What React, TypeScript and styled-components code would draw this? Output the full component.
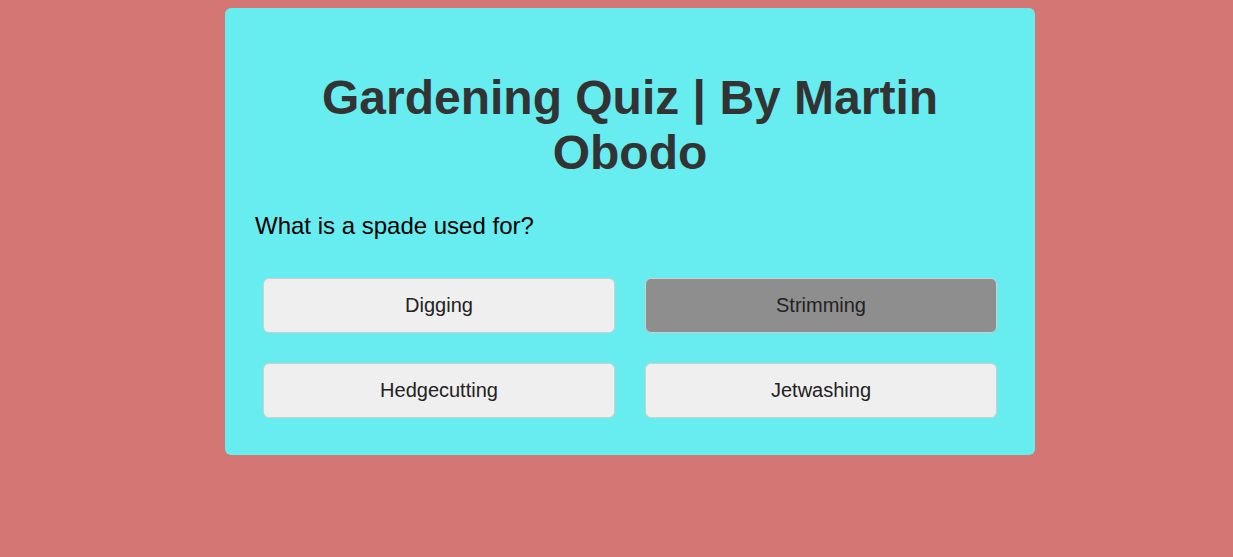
import React from "react";
import styled, { createGlobalStyle } from "styled-components";

const GlobalStyle = createGlobalStyle`
  html, body {
    margin: 0;
    padding: 0;
    background: #d47673;
    font-family: "Liberation Sans", Arial, sans-serif;
  }
`;

const Page = styled.div`
  display: flex;
  justify-content: center;
  padding: 8px 0 0 27px;
  min-height: 557px;
  box-sizing: border-box;
`;

const Card = styled.div`
  width: 810px;
  align-self: flex-start;
  box-sizing: border-box;
  background: #67ecf0;
  border-radius: 6px;
  padding: 30px 30px 29px;
`;

const Title = styled.h1`
  margin: 32px 0 32px;
  font-size: 48px;
  font-weight: 700;
  line-height: normal;
  color: #333333;
  text-align: center;
`;

const Question = styled.p`
  margin: 0;
  font-size: 24px;
  line-height: normal;
  color: #000;
`;

const Answers = styled.div`
  display: grid;
  grid-template-columns: 1fr 1fr;
  gap: 30px;
  margin-top: 38px;
  padding: 0 8px 8px;
`;

const AnswerButton = styled.button<{ $active?: boolean }>`
  height: 55px;
  box-sizing: border-box;
  border: 1px solid #cfcfcf;
  border-radius: 6px;
  background: ${(p) => (p.$active ? "#8f8e8e" : "#efefef")};
  color: #222;
  font-family: "Liberation Sans", Arial, sans-serif;
  font-size: 20px;
  cursor: pointer;
`;

const answers = [
  { text: "Digging" },
  { text: "Strimming", active: true },
  { text: "Hedgecutting" },
  { text: "Jetwashing" },
];

export default function App() {
  return (
    <>
      <GlobalStyle />
      <Page>
        <Card>
          <Title>Gardening Quiz | By Martin Obodo</Title>
          <Question>What is a spade used for?</Question>
          <Answers>
            {answers.map((a) => (
              <AnswerButton key={a.text} $active={a.active}>
                {a.text}
              </AnswerButton>
            ))}
          </Answers>
        </Card>
      </Page>
    </>
  );
}
